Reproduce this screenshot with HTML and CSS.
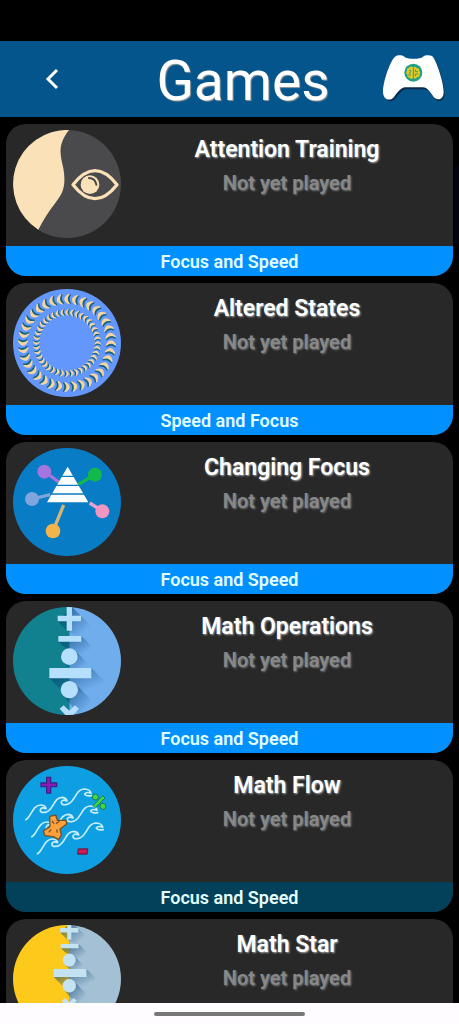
FILE: index.html
```html
<!DOCTYPE html>
<html lang="en">
<head>
  <meta charset="UTF-8" />
  <meta name="viewport" content="width=device-width, initial-scale=1.0" />
  <title>Games</title>
  <link rel="stylesheet" href="styles.css">
</head>
<body>
  <header class="topbar">
    <button class="back" aria-label="Back">
      <svg width="14" height="22" viewBox="0 0 14 22"><path d="M12 2 L3 11 L12 20" /></svg>
    </button>
    <h1>Games</h1>
    <svg class="controller" width="64" height="48" viewBox="0 4 192 144">
      <path class="controller-shadow" d="M46 12C51 9 65 9 71 14Q78 20 99 20T127 14C133 9 147 9 154 12C165 19 188 90 188 119C188 144 169 148 158 135C147 120 139 107 127 107H74C60 107 51 122 38 137C27 148 7 143 7 119C7 88 31 19 46 12Z" />
      <path fill="#fff" d="M42 7C47 4 61 4 67 9Q74 15 95 15T123 9C129 4 143 4 150 7C161 14 185 85 185 114C185 139 166 142 155 130C144 115 136 101 123 101H70C56 101 47 117 34 132C23 143 3 138 3 114C3 83 27 14 42 7Z" />
      <circle cx="94" cy="57" r="27" fill="#20a184" />
      <path fill="#dfc928" d="M91 40Q84 36 81 43Q73 44 75 52Q70 57 76 63Q75 72 83 72Q90 79 94 72Q100 79 105 71Q114 71 113 62Q117 56 112 51Q112 42 104 43Q100 36 94 41Z" />
      <path fill="none" stroke="#4d9962" stroke-width="3" d="M94 41V73M81 51Q86 47 87 54Q82 55 83 61M100 48V54H108M100 67V61H108M77 64H87" />
    </svg>
  </header>

  <main class="games">
    <a class="card" href="#">
      <div class="card-body">
        <svg class="icon" viewBox="0 0 324 324">
          <circle cx="162" cy="162" r="162" fill="#4a494b" />
          <path fill="#fae1b8" d="M168 0C130 48 144 80 151 115C160 170 150 190 123 224Q99 254 76 299A162 162 0 0 1 168 0Z" />
          <path fill="none" stroke="#fae1b8" stroke-width="10" stroke-linejoin="round" d="M180 164Q246 80 312 164Q246 248 180 164Z" />
          <circle cx="231" cy="164" r="28" fill="#fae1b8" />
          <path fill="none" stroke="#4a494b" stroke-width="6" stroke-linecap="round" d="M228 144Q247 145 250 164" />
        </svg>
        <div class="info">
          <h2>Attention Training</h2>
          <p>Not yet played</p>
        </div>
      </div>
      <div class="tag">Focus and Speed</div>
    </a>

    <a class="card" href="#">
      <div class="card-body">
        <svg class="icon" viewBox="0 0 324 324">
          <defs>
            <g id="crescent">
              <path fill="#18647f" d="M9 -16Q-12 0 9 16Q16 16 14 14Q4 0 14 -14Q14 -16 9 -16Z" />
              <path fill="#f4d5a2" d="M5 -17Q-23 0 5 17Q11 17 9 15Q-4 0 9 -15Q10 -17 5 -17Z" />
            </g>
          </defs>
          <circle cx="162" cy="162" r="162" fill="#6397fb" />
          <g id="rings"></g>
        </svg>
        <div class="info">
          <h2>Altered States</h2>
          <p>Not yet played</p>
        </div>
      </div>
      <div class="tag">Speed and Focus</div>
    </a>

    <a class="card" href="#">
      <div class="card-body">
        <svg class="icon" viewBox="0 0 324 324">
          <circle cx="162" cy="162" r="162" fill="#087cc5" />
          <g stroke-width="10">
            <path stroke="#a475de" d="M95 71L137 102" />
            <path stroke="#12b94b" d="M246 80L195 110" />
            <path stroke="#7fa5dc" d="M57 153L112 140" />
            <path stroke="#e9a3d0" d="M268 189L230 165" />
            <path stroke="#d5b477" d="M120 249L152 171" />
          </g>
          <circle cx="94" cy="71" r="21" fill="#a475de" />
          <circle cx="246" cy="80" r="21" fill="#12b94b" />
          <circle cx="57" cy="153" r="21" fill="#7fa5dc" />
          <circle cx="268" cy="190" r="21" fill="#f096c0" />
          <circle cx="120" cy="249" r="22" fill="#f3b44c" />
          <path fill="#fff" d="M164 56L226 163H102Z" />
          <path stroke="#087cc5" stroke-width="4" d="M143 85H186M128 112H201M112 138H217" />
        </svg>
        <div class="info">
          <h2>Changing Focus</h2>
          <p>Not yet played</p>
        </div>
      </div>
      <div class="tag">Focus and Speed</div>
    </a>

    <a class="card" href="#">
      <div class="card-body">
        <svg class="icon" viewBox="0 0 324 324">
          <defs>
            <clipPath id="disc"><circle cx="162" cy="162" r="162" /></clipPath>
            <linearGradient id="fade" x1="0" y1="0" x2="1" y2="1">
              <stop offset="0.3" stop-color="#003a70" stop-opacity="0.45" />
              <stop offset="0.8" stop-color="#003a70" stop-opacity="0" />
            </linearGradient>
            <g id="operators">
              <g fill="url(#fade)">
                <path d="M177 0L236 59V90L200 92L161 71L134 43Z" />
                <path d="M205 87L233 115V153L187 149L136 104Z" />
                <path d="M187 132L230 175V190H176L151 167Z" />
                <path d="M235 183L270 218V256L224 260L155 260L109 214Z" />
                <path d="M187 230L236 280L200 324L151 266Z" />
              </g>
              <path d="M161 -20H177V26H204V43H177V71H161V43H134V26H161Z" />
              <path d="M136 87H205V104H136Z" />
              <circle cx="169" cy="149" r="25" />
              <path d="M109 183H235V214H109Z" />
              <circle cx="169" cy="248" r="26" />
              <path d="M140 305L152 295L169 311L186 295L198 305L181 324L198 343L186 353L169 336L152 353L140 343L157 324Z" />
            </g>
          </defs>
          <g clip-path="url(#disc)">
            <path fill="#11818f" d="M0 0H170V324H0Z" />
            <path fill="#70adec" d="M169 0H324V324H169Z" />
            <use href="#operators" fill="#b5dffa" />
          </g>
        </svg>
        <div class="info">
          <h2>Math Operations</h2>
          <p>Not yet played</p>
        </div>
      </div>
      <div class="tag">Focus and Speed</div>
    </a>

    <a class="card" href="#">
      <div class="card-body">
        <svg class="icon" viewBox="0 0 324 324">
          <circle cx="162" cy="162" r="162" fill="#0d9fe1" />
          <g fill="none" stroke="#c7edfb" stroke-width="5" stroke-linecap="round" stroke-linejoin="round">
            <path id="wave" d="M38 161C55 154 57 116 85 117Q98 119 99 128Q86 122 82 131Q80 141 96 139C122 136 120 94 148 94Q161 96 162 105Q148 99 145 108Q144 118 159 116C186 114 186 69 214 69Q232 70 234 82Q220 76 215 84Q218 92 236 89" />
            <use href="#wave" x="18" y="51" />
            <use href="#wave" x="35" y="102" />
          </g>
          <path fill="#8b1bb8" stroke="#3b2588" stroke-width="4" d="M101 34H113V51H131V62H113V81H101V62H84V51H101Z" />
          <path fill="#ffa13b" stroke="#76522b" stroke-width="4" stroke-linejoin="round" d="M110 151L128 147L133 163L159 163L161 174L141 189L145 207L137 221L121 212L96 209L91 195L111 182Z" />
          <path fill="none" stroke="#76522b" stroke-width="4" d="M117 165L123 173M129 173L140 164M115 190L107 199M131 190L133 200" />
          <g fill="#43d544" stroke="#177e51" stroke-width="3">
            <circle cx="247" cy="93" r="9" />
            <circle cx="270" cy="121" r="9" />
            <path d="M269 89L276 96L247 125L240 119Z" />
          </g>
          <path fill="#d41b52" stroke="#70214d" stroke-width="4" stroke-linejoin="round" d="M196 249H224L222 264H194Z" />
        </svg>
        <div class="info">
          <h2>Math Flow</h2>
          <p>Not yet played</p>
        </div>
      </div>
      <div class="tag tag-dark">Focus and Speed</div>
    </a>

    <a class="card" href="#">
      <div class="card-body">
        <svg class="icon" viewBox="0 0 324 324">
          <g clip-path="url(#disc)">
            <path fill="#fdc91b" d="M0 0H170V324H0Z" />
            <path fill="#a3c0d4" d="M169 0H324V324H169Z" />
            <use href="#operators" fill="#c4e3f1" transform="translate(37 -11) scale(0.78)" />
          </g>
        </svg>
        <div class="info">
          <h2>Math Star</h2>
          <p>Not yet played</p>
        </div>
      </div>
    </a>
  </main>

  <div class="edge-handle"></div>
  <footer class="navbar"><div class="pill"></div></footer>

  <script src="script.js"></script>
</body>
</html>
```
FILE: styles.css
```css
* {
  box-sizing: border-box;
}

body {
  margin: 0;
  height: 100vh;
  padding-top: 41px;
  display: flex;
  flex-direction: column;
  overflow: hidden;
  background: #000;
  color: #fff;
  font-family: Roboto, "Liberation Sans", sans-serif;
}

h1,
h2,
p {
  margin: 0;
}

.topbar {
  flex: none;
  height: 76px;
  display: grid;
  grid-template-columns: 104px 1fr 77px;
  align-items: center;
  background: #03558c;
}

.topbar h1 {
  text-align: center;
  font-size: 55px;
  line-height: 72px;
  padding-top: 4px;
  font-weight: 400;
  text-shadow: 1px 1px 1px #999;
}

.back {
  height: 76px;
  padding: 0;
  border: none;
  background: none;
  display: flex;
  align-items: center;
  justify-content: center;
  cursor: pointer;
}

.back path {
  fill: none;
  stroke: #fff;
  stroke-width: 3;
}

.controller-shadow {
  fill: #092c4b;
}

.games {
  flex: 1;
  min-height: 0;
  overflow: hidden;
  padding: 7px 6px 0;
  display: flex;
  flex-direction: column;
  gap: 7px;
}

.card {
  flex: none;
  border-radius: 20px;
  overflow: hidden;
  background: #282828;
  color: #fff;
  text-decoration: none;
}

.card-body {
  height: 122px;
  display: flex;
  padding: 6px 0 0 7px;
}

.icon {
  flex: none;
  width: 108px;
  height: 108px;
}

.info {
  flex: 1;
  padding-top: 6px;
  text-align: center;
}

.info h2 {
  font-size: 23px;
  line-height: 28px;
  font-weight: 600;
  text-shadow: 1px 1px 2px #aaa;
}

.info p {
  margin-top: 6px;
  font-size: 20px;
  line-height: 27px;
  font-weight: 600;
  color: #888;
  text-shadow: 1px 1px 2px #777;
}

.tag {
  height: 30px;
  line-height: 32px;
  text-align: center;
  font-size: 18px;
  font-weight: 600;
  background: #0090ff;
  color: #e2ffff;
}

.tag-dark {
  background: #03405a;
}

.edge-handle {
  position: absolute;
  top: 165px;
  right: 0;
  width: 5px;
  height: 80px;
  border-radius: 5px 0 0 5px;
  background: #03030f;
}

.navbar {
  flex: none;
  height: 21px;
  display: flex;
  align-items: center;
  justify-content: center;
  background: #fffcff;
}

.pill {
  width: 33%;
  height: 4px;
  border-radius: 2px;
  background: #777;
}
```
FILE: script.js
```js
const rings = document.getElementById("rings");

function addRing(count, radius, scale) {
  for (let i = 0; i < count; i++) {
    const use = document.createElementNS("http://www.w3.org/2000/svg", "use");
    const angle = (360 / count) * i;
    use.setAttribute("href", "#crescent");
    use.setAttribute("transform", `rotate(${angle} 162 162) translate(162 ${162 - radius}) scale(${scale})`);
    rings.appendChild(use);
  }
}

addRing(36, 132, 0.9);
addRing(40, 92, 0.6);
```
